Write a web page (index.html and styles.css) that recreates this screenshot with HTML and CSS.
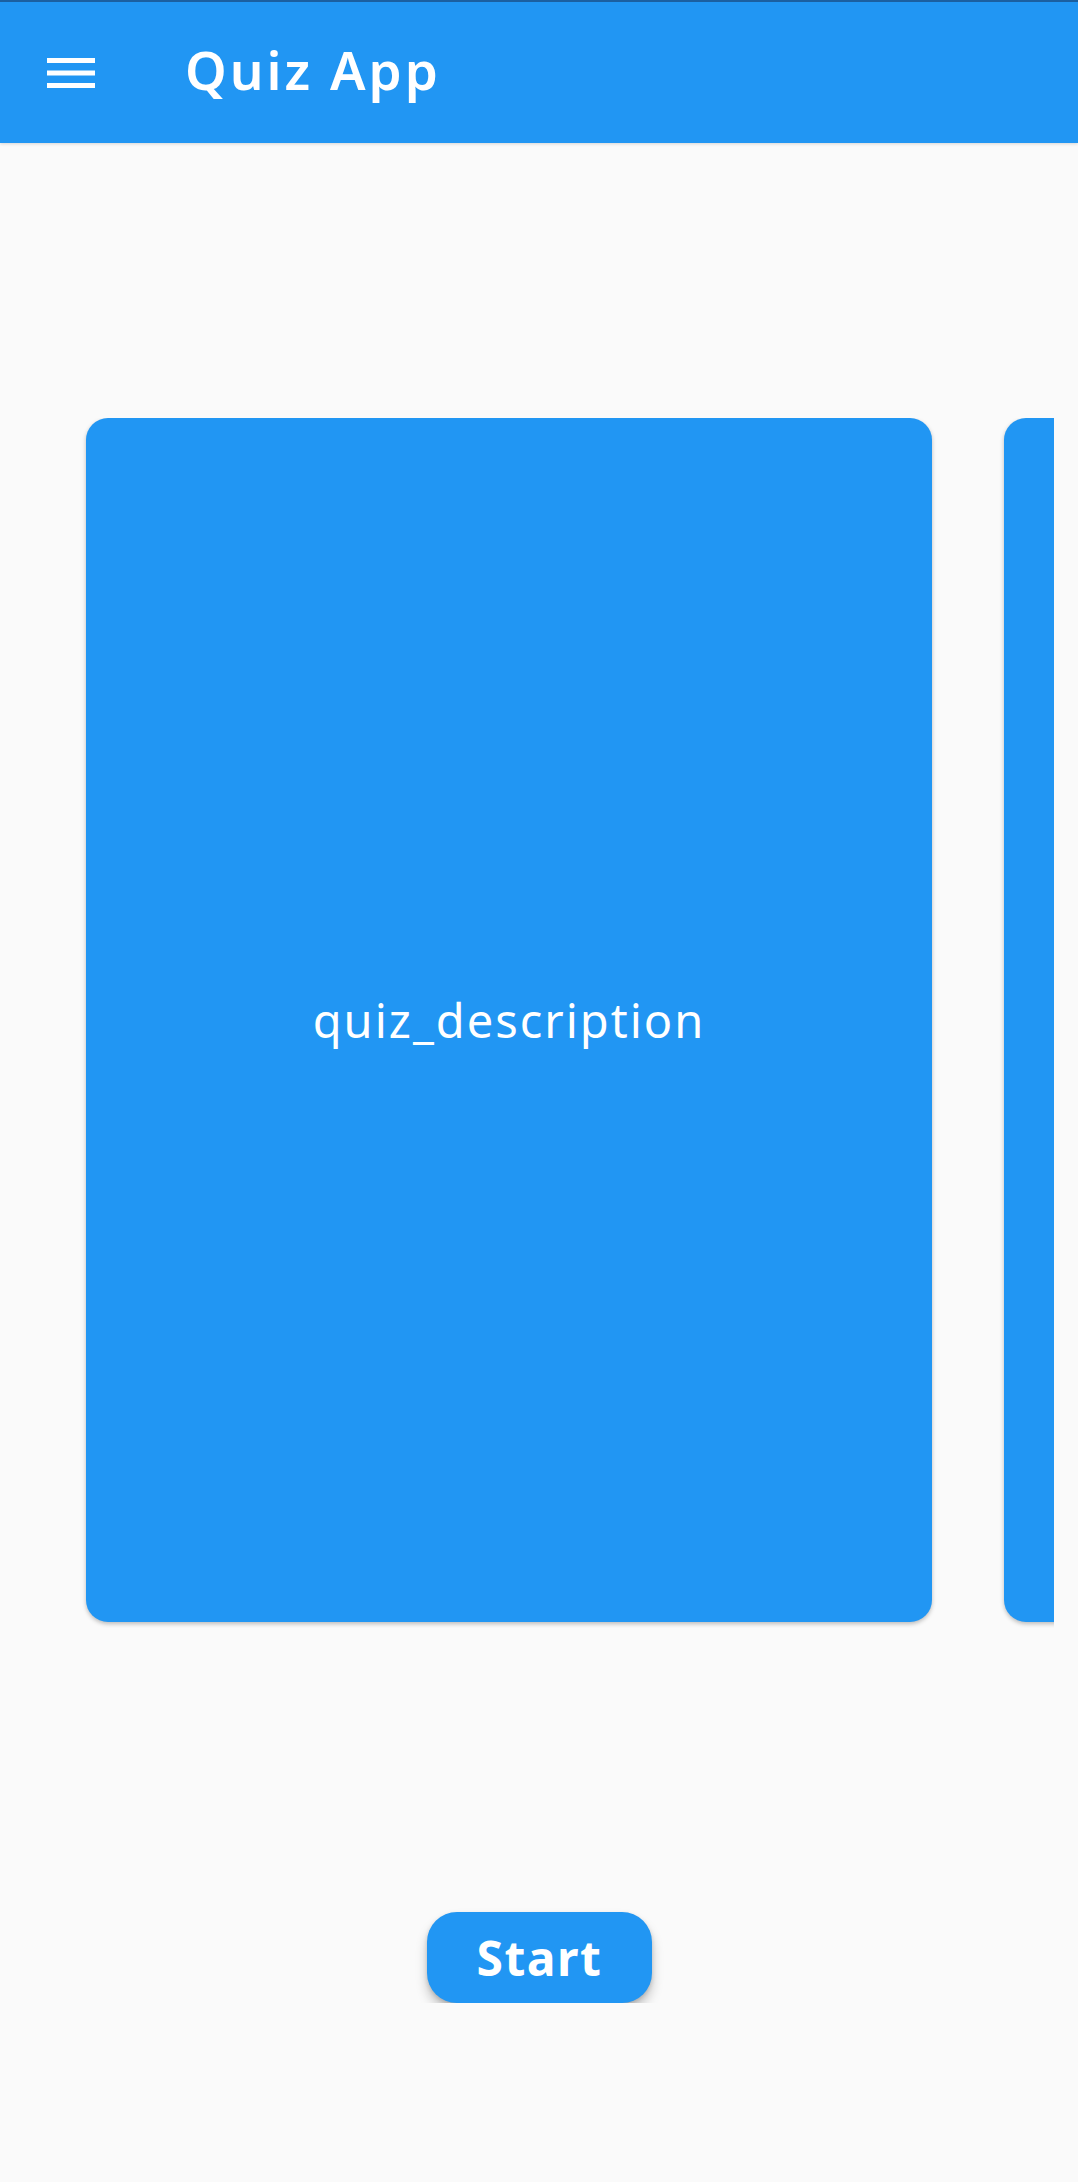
FILE: index.html
```html
<!DOCTYPE html>
<html>
<head>
<meta charset="utf-8">
<link rel="stylesheet" href="styles.css">
</head>
<body>
<header class="appbar">
  <button class="menu" aria-label="menu">
    <svg width="48" height="32" viewBox="0 0 48 32"><rect x="0" y="0" width="48" height="5" fill="#fff"/><rect x="0" y="12.5" width="48" height="5" fill="#fff"/><rect x="0" y="25" width="48" height="5" fill="#fff"/></svg>
  </button>
  <h1 class="title">Quiz App</h1>
</header>
<main class="main">
  <div class="carousel">
    <div class="card"><span class="desc">quiz_description</span></div>
    <div class="card"></div>
  </div>
  <div class="actions">
    <button class="start">Start</button>
  </div>
</main>
</body>
</html>
```
FILE: styles.css
```css
html, body {
  margin: 0;
  padding: 0;
  background: #fafafa;
  font-family: "Noto Sans", "Open Sans", sans-serif;
}
.appbar {
  height: 141px;
  background: #2196f3;
  border-top: 2px solid #1b5fa0;
  display: flex;
  align-items: center;
  box-shadow: 0 1px 3px rgba(0,0,0,0.15);
}
.menu {
  background: none;
  border: 0;
  padding: 0;
  margin-left: 47px;
  margin-top: 2px;
  width: 48px;
  height: 32px;
  display: flex;
}
.title {
  margin: 0 0 6px 90px;
  color: #fff;
  font-size: 53px;
  font-weight: 600;
  letter-spacing: 3px;
}
.main {
  padding-top: 275px;
}
.carousel {
  width: 1054px;
  overflow: hidden;
  display: flex;
  gap: 72px;
  padding-left: 86px;
  box-sizing: border-box;
  padding-bottom: 6px;
}
.card {
  flex: 0 0 846px;
  height: 1204px;
  background: #2196f3;
  border-radius: 22px;
  box-shadow: 0 2px 4px rgba(0,0,0,0.25);
  display: flex;
  align-items: center;
  justify-content: center;
}
.desc {
  color: #fff;
  font-size: 47px;
  font-weight: 400;
  letter-spacing: 2px;
}
.actions {
  display: flex;
  justify-content: center;
  padding-top: 284px;
  padding-left: 1px;
}
.start {
  width: 225px;
  height: 91px;
  border: 0;
  border-radius: 30px;
  background: #2196f3;
  color: #fff;
  font-family: "Noto Sans", "Open Sans", sans-serif;
  font-size: 48px;
  font-weight: 700;
  letter-spacing: 1.5px;
  box-shadow: 0 8px 12px rgba(0,0,0,0.22), 0 2px 4px rgba(0,0,0,0.15);
  padding: 0;
}
```
